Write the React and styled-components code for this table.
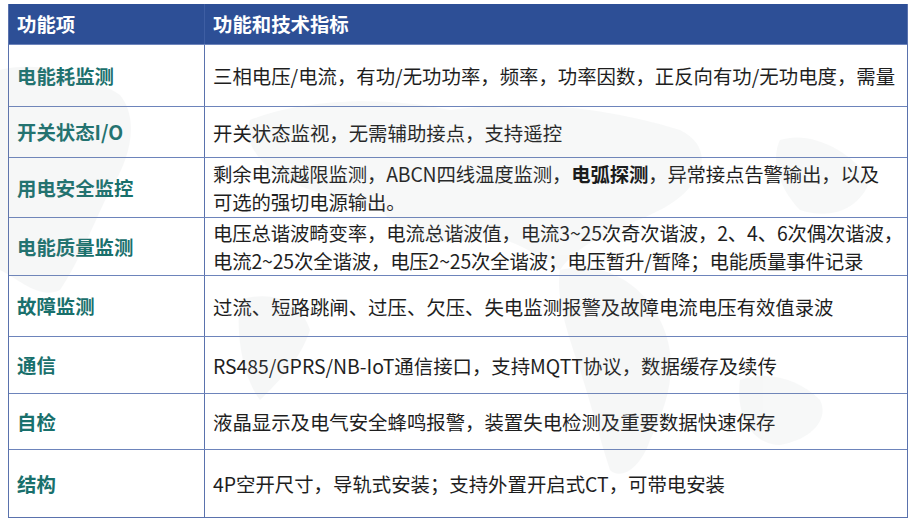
import React from "react";
import styled, { createGlobalStyle } from "styled-components";

const Global = createGlobalStyle`
  html, body { margin: 0; padding: 0; background: #ffffff; }
  body { font-family: "Noto Sans CJK SC", "Noto Sans", sans-serif; }
`;

const Page = styled.div`
  position: relative;
  width: 920px;
  height: 529px;
  padding: 4px 0 0 8px;
  box-sizing: border-box;
  overflow: hidden;
`;

const Watermark = styled.svg`
  position: absolute;
  left: 0;
  top: 0;
  width: 920px;
  height: 529px;
  pointer-events: none;
  z-index: 1;
`;

const Table = styled.div`
  position: relative;
  z-index: 0;
  width: 900px;
  box-sizing: border-box;
  border: 1px solid #5a72ad;
  border-top: none;
  display: flex;
  flex-direction: column;
`;

const Row = styled.div`
  display: grid;
  grid-template-columns: 196px 1fr;
  height: ${(p) => p.$h}px;
  box-sizing: border-box;
  border-top: ${(p) => (p.$head ? "none" : "1px solid #6d84bb")};
  background: ${(p) => (p.$head ? "#2d4f96" : "transparent")};
`;

const Cell = styled.div`
  display: flex;
  align-items: center;
  padding-left: 8px;
  box-sizing: border-box;
  font-size: 19.4px;
  line-height: 28px;
  min-width: 0;
  border-right: ${(p) => (p.$first ? (p.$head ? "1px solid #3e5ea3" : "1px solid #5a72ad") : "none")};
`;

const HeadText = styled.span`
  color: #ffffff;
  font-weight: 700;
`;

const Label = styled.span`
  color: #19706c;
  font-weight: 700;
`;

const Desc = styled.span`
  color: #1e1e1e;
  font-weight: 400;
  white-space: nowrap;
  letter-spacing: ${(p) => (p.$multi ? "-0.15px" : "0")};
  padding-top: ${(p) => (p.$multi ? 0 : 1)}px;
`;

const Strong = styled.b`
  font-weight: 700;
  color: #111;
`;

const rows = [
  { h: 62, label: "电能耗监测", desc: "三相电压/电流，有功/无功功率，频率，功率因数，正反向有功/无功电度，需量" },
  { h: 51, label: "开关状态I/O", desc: "开关状态监视，无需辅助接点，支持遥控" },
  {
    h: 60,
    label: "用电安全监控",
    desc: (
      <>
        剩余电流越限监测，ABCN四线温度监测，<Strong>电弧探测</Strong>，异常接点告警输出，以及
        <br />
        可选的强切电源输出。
      </>
    ),
    multi: true,
  },
  {
    h: 58,
    label: "电能质量监测",
    desc: (
      <>
        电压总谐波畸变率，电流总谐波值，电流3~25次奇次谐波，2、4、6次偶次谐波，
        <br />
        电流2~25次全谐波，电压2~25次全谐波；电压暂升/暂降；电能质量事件记录
      </>
    ),
    multi: true,
  },
  { h: 61, label: "故障监测", desc: "过流、短路跳闸、过压、欠压、失电监测报警及故障电流电压有效值录波" },
  { h: 57, label: "通信", desc: "RS485/GPRS/NB-IoT通信接口，支持MQTT协议，数据缓存及续传" },
  { h: 56, label: "自检", desc: "液晶显示及电气安全蜂鸣报警，装置失电检测及重要数据快速保存" },
  { h: 68, label: "结构", desc: "4P空开尺寸，导轨式安装；支持外置开启式CT，可带电安装" },
];

export default function App() {
  return (
    <>
      <Global />
      <Page>
        <Table>
          <Row $head $h={40}>
            <Cell $first $head>
              <HeadText>功能项</HeadText>
            </Cell>
            <Cell $head>
              <HeadText>功能和技术指标</HeadText>
            </Cell>
          </Row>
          {rows.map((r, i) => (
            <Row key={i} $h={r.h}>
              <Cell $first>
                <Label>{r.label}</Label>
              </Cell>
              <Cell>
                <Desc $multi={r.multi}>{r.desc}</Desc>
              </Cell>
            </Row>
          ))}
        </Table>
        <Watermark viewBox="0 0 920 529">
          <g fill="#9aa0a6" opacity="0.08">
            <path d="M0 70 C40 60 90 75 120 95 C140 120 130 160 110 190 C95 220 80 260 60 290 C40 300 20 280 0 270 Z" />
            <path d="M250 120 C300 100 380 95 450 110 C520 100 600 105 680 130 C720 150 700 190 660 210 C620 230 580 240 560 270 C530 250 500 230 470 240 C430 250 400 230 380 210 C340 200 300 190 270 170 C250 150 245 135 250 120 Z" />
            <path d="M560 270 C600 260 640 280 660 320 C680 360 670 400 650 440 C640 470 620 480 610 470 C600 440 590 400 580 370 C570 340 555 300 560 270 Z" />
            <path d="M740 380 C770 370 800 380 820 400 C830 420 810 440 780 445 C755 445 735 420 740 380 Z" />
            <path d="M240 300 C270 290 300 300 310 330 C300 360 280 380 260 400 C245 380 235 340 240 300 Z" />
            <path d="M780 140 C810 130 850 150 870 180 C860 210 830 220 800 210 C780 190 770 160 780 140 Z" />
          </g>
        </Watermark>
      </Page>
    </>
  );
}
